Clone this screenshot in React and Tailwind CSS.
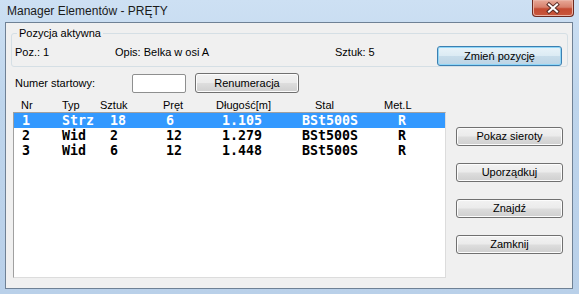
import React from "react";

const rows = [
  ["1", "Strz", "18", "6", "1.105", "BSt500S", "R"],
  ["2", "Wid", "2", "12", "1.279", "BSt500S", "R"],
  ["3", "Wid", "6", "12", "1.448", "BSt500S", "R"],
];

// column widths of the list, monospace cells of 8px
const cols = ["w-[40px]", "w-[48px]", "w-[56px]", "w-[56px]", "w-[80px]", "w-[96px]", "flex-1"];

const headers = [
  ["Nr", "w-[41px]"],
  ["Typ", "w-[38px]"],
  ["Sztuk", "w-[63px]"],
  ["Pręt", "w-[53px]"],
  ["Długość[m]", "w-[99px]"],
  ["Stal", "w-[69px]"],
  ["Met.L", "flex-1"],
];

function Button({ children, className = "" }) {
  return (
    <button
      className={
        "flex items-center justify-center rounded-[3px] border border-[#707070] bg-[linear-gradient(#f2f2f2_0%,#ebebeb_48%,#dddddd_52%,#cfcfcf_100%)] shadow-[inset_0_0_0_1px_#fcfcfc] text-[11px] leading-[13px] text-black " +
        className
      }
    >
      {children}
    </button>
  );
}

function CloseButton() {
  return (
    <div className="w-[42px] h-[17px] rounded-b-[4px] border border-t-0 border-[#6e2a20] bg-[linear-gradient(#e8a998_0%,#d7806c_45%,#c44b32_55%,#c9573d_100%)] shadow-[inset_0_0_0_1px_#eab3a5]">
      <svg width="40" height="16" viewBox="0 0 40 16">
        <path d="M16 4.5 L24 11.5 M24 4.5 L16 11.5" stroke="#5a2c26" strokeWidth="4" strokeLinecap="square" fill="none" />
        <path d="M16 4.5 L24 11.5 M24 4.5 L16 11.5" stroke="#ffffff" strokeWidth="2" strokeLinecap="square" fill="none" />
      </svg>
    </div>
  );
}

export default function App() {
  return (
    <div className="w-[579px] h-[294px] flex flex-col overflow-hidden bg-[linear-gradient(180deg,#cde0f3_0%,#bed5ec_35%,#b9d0e9_100%)] font-['Liberation_Sans',Arial,sans-serif]">
      {/* title bar */}
      <div className="h-[22px] flex items-start justify-between pl-[7px] pr-[5px]">
        <div className="text-[12px] leading-[22px] text-[#1a1a1a]">Manager Elementów - PRĘTY</div>
        <CloseButton />
      </div>

      {/* client area */}
      <div className="ml-[5px] mr-[6px] h-[267px] border border-[#6f8195] bg-[#f0f0f0] flex flex-col">
        <fieldset className="mx-[5px] mt-[4px] border border-[#d5dfe5] rounded-[3px] pl-[3px] pr-[5px] pb-0">
          <legend className="ml-[2px] px-[2px] text-[11px] leading-[13px] text-black">Pozycja aktywna</legend>
          <div className="flex items-start mt-[6px] text-[11px] leading-[13px] text-black">
            <span className="w-[100px]">Poz.: 1</span>
            <span className="w-[220px]">Opis: Belka w osi A</span>
            <span className="w-[102px]">Sztuk: 5</span>
            <button className="w-[125px] h-[20px] flex items-center justify-center rounded-[3px] border border-[#3c7fb1] bg-[linear-gradient(#e9f3f9_0%,#dcebf4_48%,#c7dcea_52%,#bcd4e5_100%)] shadow-[inset_0_0_0_1px_#8fd6f7] text-[11px] leading-[13px] text-black">
              Zmień pozycję
            </button>
          </div>
        </fieldset>

        <div className="flex items-center h-[20px] mt-[6px] pl-[9px] text-[11px] leading-[13px] text-black">
          <span className="w-[117px]">Numer startowy:</span>
          <div className="w-[54px] h-[19px] bg-white border border-[#8e8f8f] rounded-[2px]" />
          <Button className="ml-[9px] w-[104px] h-[20px]">Renumeracja</Button>
        </div>

        <div className="flex h-[13px] mt-[6px] pl-[15px] text-[11px] leading-[13px] text-black">
          {headers.map(([t, w]) => (
            <span key={t} className={w}>
              {t}
            </span>
          ))}
        </div>

        <div className="flex">
          <div className="ml-[7px] w-[433px] h-[166px] bg-white border border-[#a0a0a0] border-b-[#dcdcdc] border-r-[#dcdcdc]">
            {rows.map((r, i) => (
              <div
                key={i}
                className={
                  "flex h-[15px] pl-[8px] font-['DejaVu_Sans_Mono',monospace] font-bold text-[13.3px] leading-[15px] whitespace-pre " +
                  (i === 0 ? "bg-[#3399ff] text-white" : "text-black")
                }
              >
                {r.map((c, j) => (
                  <span key={j} className={cols[j]}>
                    {c}
                  </span>
                ))}
              </div>
            ))}
          </div>

          <div className="ml-[10px] w-[107px] flex flex-col gap-[17px] pt-[15px]">
            <Button className="h-[19px]">Pokaz sieroty</Button>
            <Button className="h-[19px]">Uporządkuj</Button>
            <Button className="h-[19px]">Znajdź</Button>
            <Button className="h-[19px]">Zamknij</Button>
          </div>
        </div>
      </div>
    </div>
  );
}
